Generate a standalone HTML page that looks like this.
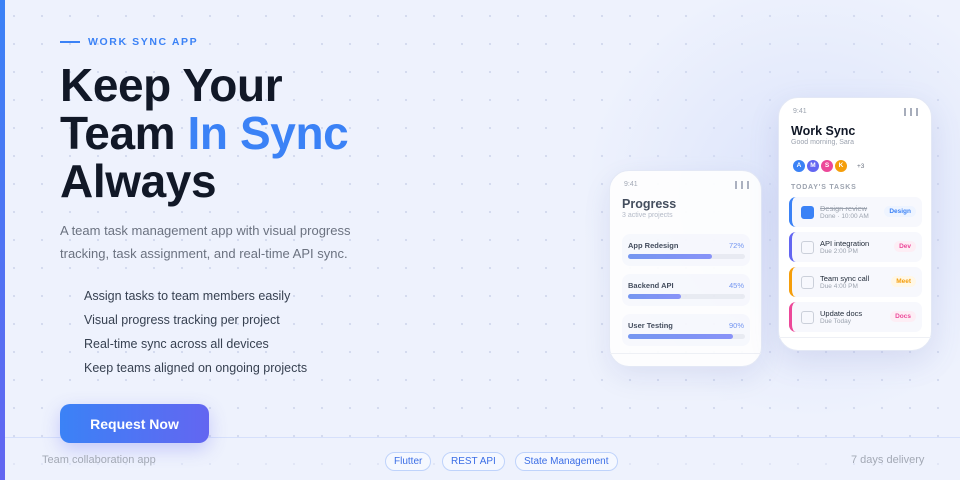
<!DOCTYPE html>
<html><head><meta charset="utf-8"><style>
*{margin:0;padding:0;box-sizing:border-box}
body{width:960px;height:480px;overflow:hidden;position:relative;font-family:"Liberation Sans",sans-serif;background:#eef2fd;}
.dots{position:absolute;inset:0;background-image:radial-gradient(circle,#d3daee 1px,transparent 1.3px);background-size:28px 28px;background-position:0px 2px;}
.glow{position:absolute;left:560px;top:0;width:420px;height:440px;background:radial-gradient(ellipse at 60% 45%,rgba(210,220,250,.7),rgba(238,242,253,0) 65%);}
.bar{position:absolute;left:0;top:0;width:5px;height:480px;background:linear-gradient(#3b82f6,#6366f1);}
.eyebrow{position:absolute;left:60px;top:36px;color:#3b82f6;font-size:10.5px;font-weight:bold;letter-spacing:1.6px;display:flex;align-items:center}
.eyebrow:before{content:"";width:20px;height:2px;background:#3b82f6;margin-right:8px}
h1{position:absolute;left:60px;top:61px;font-size:46px;line-height:48px;font-weight:bold;color:#111827;letter-spacing:-.4px}
h1 span{color:#3b82f6}
.desc{position:absolute;left:60px;top:219px;width:300px;font-size:13px;line-height:23px;color:#6b7280}
ul{position:absolute;left:84px;top:286px;list-style:none;font-size:12.5px;color:#374151}
ul li{height:24px;line-height:20px}
.btn{position:absolute;left:60px;top:404px;width:149px;height:39px;border-radius:10px;background:linear-gradient(90deg,#3b82f6,#6366f1);color:#fff;font-weight:bold;font-size:14px;display:flex;align-items:center;justify-content:center;box-shadow:0 6px 18px rgba(99,102,241,.3)}
.foot{position:absolute;left:5px;top:437px;width:955px;height:43px;border-top:1px solid #d6e0fb;background:rgba(238,242,253,.5)}
.ft{position:absolute;top:454px;font-size:11px;color:#a3a9b5}
.tag{position:absolute;top:452px;height:19px;border:1px solid #bfd3fb;border-radius:10px;background:#f5f8ff;color:#3b6ee6;font-size:10px;line-height:17px;padding:0 8px}
.phone{position:absolute;background:#fff;border-radius:20px;border:1px solid #e3e8f5;box-shadow:0 10px 30px rgba(99,110,180,.15)}
.time{position:absolute;font-size:7px;color:#9ca3af}
.sig{position:absolute;width:14px;height:8px;border-left:2px solid #a7adbb;border-right:2px solid #a7adbb}
.sig:after{content:"";position:absolute;left:4px;top:0;width:2px;height:8px;background:#a7adbb}
.pcard{position:absolute;left:12px;width:128px;height:32px;background:#f8f9fe;border-radius:8px}
.pcard b{position:absolute;left:6px;top:7px;font-size:7.5px;color:#374151}
.pcard i{position:absolute;right:6px;top:7px;font-size:7.5px;color:#6b8ff0;font-style:normal}
.track{position:absolute;left:6px;top:20px;width:117px;height:5px;background:#e9ebf2;border-radius:3px}
.fill{height:5px;border-radius:3px;background:linear-gradient(90deg,#6b8ff0,#818cf8)}
.task{position:absolute;left:10px;width:133px;height:30px;background:#f7f8fd;border-radius:7px;border-left:3px solid}
.cb{position:absolute;left:9px;top:9px;width:13px;height:13px;border:1.5px solid #cbd0da;border-radius:3px}
.tt{position:absolute;left:28px;top:7px;font-size:7.5px;color:#1f2937}
.td{position:absolute;left:28px;top:16px;font-size:6.5px;color:#9ca3af}
.tg{position:absolute;right:6px;top:9px;font-size:6.5px;font-weight:bold;padding:2px 5px;border-radius:6px}
.av{position:absolute;width:14px;height:14px;border-radius:50%;color:#fff;font-size:6.5px;font-weight:bold;text-align:center;line-height:12px;border:1px solid #fff}
</style></head><body>
<div class="dots"></div><div class="glow"></div>
<div class="bar"></div>
<div class="eyebrow">WORK SYNC APP</div>
<h1>Keep Your<br>Team <span>In Sync</span><br>Always</h1>
<div class="desc">A team task management app with visual progress tracking, task assignment, and real-time API sync.</div>
<ul><li>Assign tasks to team members easily</li><li>Visual progress tracking per project</li><li>Real-time sync across all devices</li><li>Keep teams aligned on ongoing projects</li></ul>
<div class="foot"></div>
<div class="btn">Request Now</div>
<div class="ft" style="left:42px">Team collaboration app</div>
<div class="tag" style="left:385px">Flutter</div>
<div class="tag" style="left:442px">REST API</div>
<div class="tag" style="left:515px">State Management</div>
<div class="ft" style="left:851px">7 days delivery</div>

<div class="phone" style="left:609px;top:170px;width:153px;height:197px;opacity:.92">
 <div class="time" style="left:14px;top:10px">9:41</div><div class="sig" style="left:125px;top:10px"></div>
 <div style="position:absolute;left:12px;top:26px;font-size:12.5px;font-weight:bold;color:#374151">Progress</div>
 <div style="position:absolute;left:12px;top:41px;font-size:7px;color:#b0b6c3">3 active projects</div>
 <div class="pcard" style="top:63px"><b>App Redesign</b><i>72%</i><div class="track"><div class="fill" style="width:72%"></div></div></div>
 <div class="pcard" style="top:103px"><b>Backend API</b><i>45%</i><div class="track"><div class="fill" style="width:45%"></div></div></div>
 <div class="pcard" style="top:143px"><b>User Testing</b><i>90%</i><div class="track"><div class="fill" style="width:90%"></div></div></div>
 <div style="position:absolute;left:0;right:0;top:182px;border-top:1px solid #eef0f5"></div>
</div>

<div class="phone" style="left:778px;top:97px;width:154px;height:254px">
 <div class="time" style="left:14px;top:10px">9:41</div><div class="sig" style="left:125px;top:10px"></div>
 <div style="position:absolute;left:12px;top:26px;font-size:12.5px;font-weight:bold;color:#111827">Work Sync</div>
 <div style="position:absolute;left:12px;top:41px;font-size:7px;color:#9ca3af">Good morning, Sara</div>
 <div class="av" style="left:13px;top:61px;background:#3b82f6">A</div>
 <div class="av" style="left:27px;top:61px;background:#6366f1">M</div>
 <div class="av" style="left:41px;top:61px;background:#ec4899">S</div>
 <div class="av" style="left:55px;top:61px;background:#f59e0b">K</div>
 <div style="position:absolute;left:78px;top:65px;font-size:6.5px;color:#6b7280">+3</div>
 <div style="position:absolute;left:12px;top:86px;font-size:7px;font-weight:bold;color:#9ca3af;letter-spacing:.8px">TODAY'S TASKS</div>
 <div class="task" style="top:99px;border-color:#3b82f6"><div class="cb" style="background:#3b82f6;border-color:#3b82f6"></div><div class="tt" style="color:#9ca3af;text-decoration:line-through">Design review</div><div class="td">Done · 10:00 AM</div><div class="tg" style="background:#eef4ff;color:#3b82f6">Design</div></div>
 <div class="task" style="top:134px;border-color:#6366f1"><div class="cb"></div><div class="tt">API integration</div><div class="td">Due 2:00 PM</div><div class="tg" style="background:#fdeef5;color:#ec4899">Dev</div></div>
 <div class="task" style="top:169px;border-color:#f59e0b"><div class="cb"></div><div class="tt">Team sync call</div><div class="td">Due 4:00 PM</div><div class="tg" style="background:#fff7e6;color:#f59e0b">Meet</div></div>
 <div class="task" style="top:204px;border-color:#ec4899"><div class="cb"></div><div class="tt">Update docs</div><div class="td">Due Today</div><div class="tg" style="background:#fdeef5;color:#ec4899">Docs</div></div>
 <div style="position:absolute;left:0;right:0;top:239px;border-top:1px solid #eef0f5"></div>
</div>
</body></html>
